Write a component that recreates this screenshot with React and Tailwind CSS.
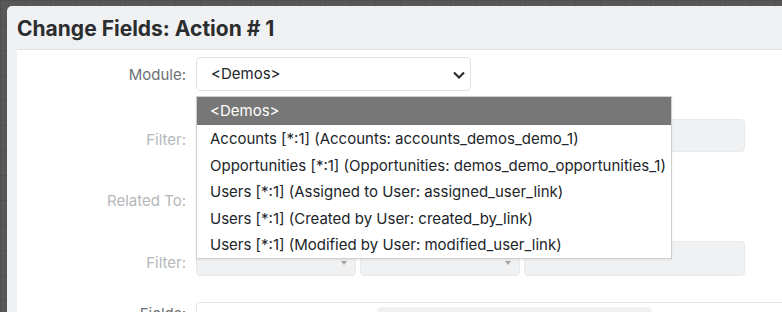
const options = [
  "<Demos>",
  "Accounts [*:1] (Accounts: accounts_demos_demo_1)",
  "Opportunities [*:1] (Opportunities: demos_demo_opportunities_1)",
  "Users [*:1] (Assigned to User: assigned_user_link)",
  "Users [*:1] (Created by User: created_by_link)",
  "Users [*:1] (Modified by User: modified_user_link)",
];

// petite flèche grise des selects désactivés
function Caret() {
  return (
    <svg width="6" height="4" viewBox="0 0 6 4" className="absolute right-[8px] top-[19px]">
      <path d="M0 0h6L3 4z" fill="#a5a5a5" />
    </svg>
  );
}

function Label({ children, disabled, className = "" }) {
  return (
    <div
      className={`w-[169px] shrink-0 text-right text-[15px] leading-[20px] ${
        disabled ? "text-[#b5b8bb]" : "text-[#6c7075]"
      } ${className}`}
    >
      {children}
    </div>
  );
}

function FilterRow({ top, labelPad, height }) {
  return (
    <div className={`flex gap-[10px] shrink-0 ${top}`}>
      <Label disabled className={labelPad}>Filter:</Label>
      <div className="flex gap-[4px]">
        <div className={`relative w-[160px] ${height} rounded-[4px] bg-[#f0f1f3] border border-[#e8e9eb]`}>
          <Caret />
        </div>
        <div className={`relative w-[160px] ${height} rounded-[4px] bg-[#f0f1f3] border border-[#e8e9eb]`}>
          <Caret />
        </div>
        <div className={`w-[221px] ${height} rounded-[4px] bg-[#f0f1f3] border border-[#e8e9eb]`}></div>
      </div>
    </div>
  );
}

export default function App() {
  return (
    <div
      className="relative w-[782px] h-[312px] overflow-hidden pt-[6px] pl-[7px] bg-[#585858] bg-[image:linear-gradient(to_right,#4f4f4f_1px,transparent_1px),linear-gradient(to_bottom,#4f4f4f_1px,transparent_1px)] bg-[size:25px_25px]"
      style={{ fontFamily: "Inter, 'Noto Sans', sans-serif" }}
    >
      <div className="w-[800px] bg-[#f0f1f3] rounded-tl-[5px] flex flex-col">
        {/* En-tête */}
        <div className="h-[43px] shrink-0 pl-[10px] flex items-end pb-[7px]">
          <h1 className="text-[21px] font-bold leading-[26px] text-[#2b2d2f]">
            Change Fields: Action # 1
          </h1>
        </div>

        {/* Panneau blanc */}
        <div className="ml-[10px] h-[400px] bg-white border-t border-[#e1e4e6] flex flex-col">
          {/* Module */}
          <div className="flex gap-[10px] mt-[7px] shrink-0">
            <Label className="pt-[8px]">Module:</Label>
            <div className="relative w-[275px] h-[34px] rounded-[4px] border border-[#dee2e6] bg-white flex items-center pl-[14px] text-[15px] text-[#212529]">
              {"<Demos>"}
              <svg width="12" height="8" viewBox="0 0 12 8" className="absolute right-[5px] top-[13px]">
                <path d="M1 1.5l5 5 5-5" fill="none" stroke="#2b2d2f" strokeWidth="2.2" />
              </svg>
            </div>
          </div>

          <FilterRow top="mt-[28px]" labelPad="pt-[11px]" height="h-[33px]" />

          {/* Related To */}
          <div className="flex gap-[10px] mt-[28px] shrink-0">
            <Label disabled className="pt-[11px]">Related To:</Label>
            <div className="w-[275px] h-[34px] rounded-[4px] bg-[#f0f1f3]"></div>
          </div>

          <FilterRow top="mt-[27px]" labelPad="pt-[12px]" height="h-[35px]" />

          {/* Fields */}
          <div className="flex gap-[10px] mt-[26px] shrink-0">
            <Label className="pt-[2px]">Fields:</Label>
            <div className="flex-1 h-[60px] rounded-tl-[4px] border-t border-l border-[#e3e7e9] pt-[4px] pl-[180px]">
              <div className="w-[275px] h-[40px] rounded-[4px] bg-[#f0f1f3]"></div>
            </div>
          </div>
        </div>
      </div>

      {/* Liste déroulante ouverte */}
      <div className="absolute left-[196px] top-[96px] w-[476px] border border-[#cfcfcf] bg-white shadow-[0_1px_2px_rgba(0,0,0,0.08)]">
        {options.map((opt, i) => (
          <div
            key={i}
            className={`flex items-center pl-[13px] text-[15px] whitespace-nowrap ${
              i === 0 ? "h-[28px] bg-[#777777] text-white" : "h-[26.6px] pt-[2px] text-[#212529]"
            }`}
          >
            {opt}
          </div>
        ))}
      </div>
    </div>
  );
}
